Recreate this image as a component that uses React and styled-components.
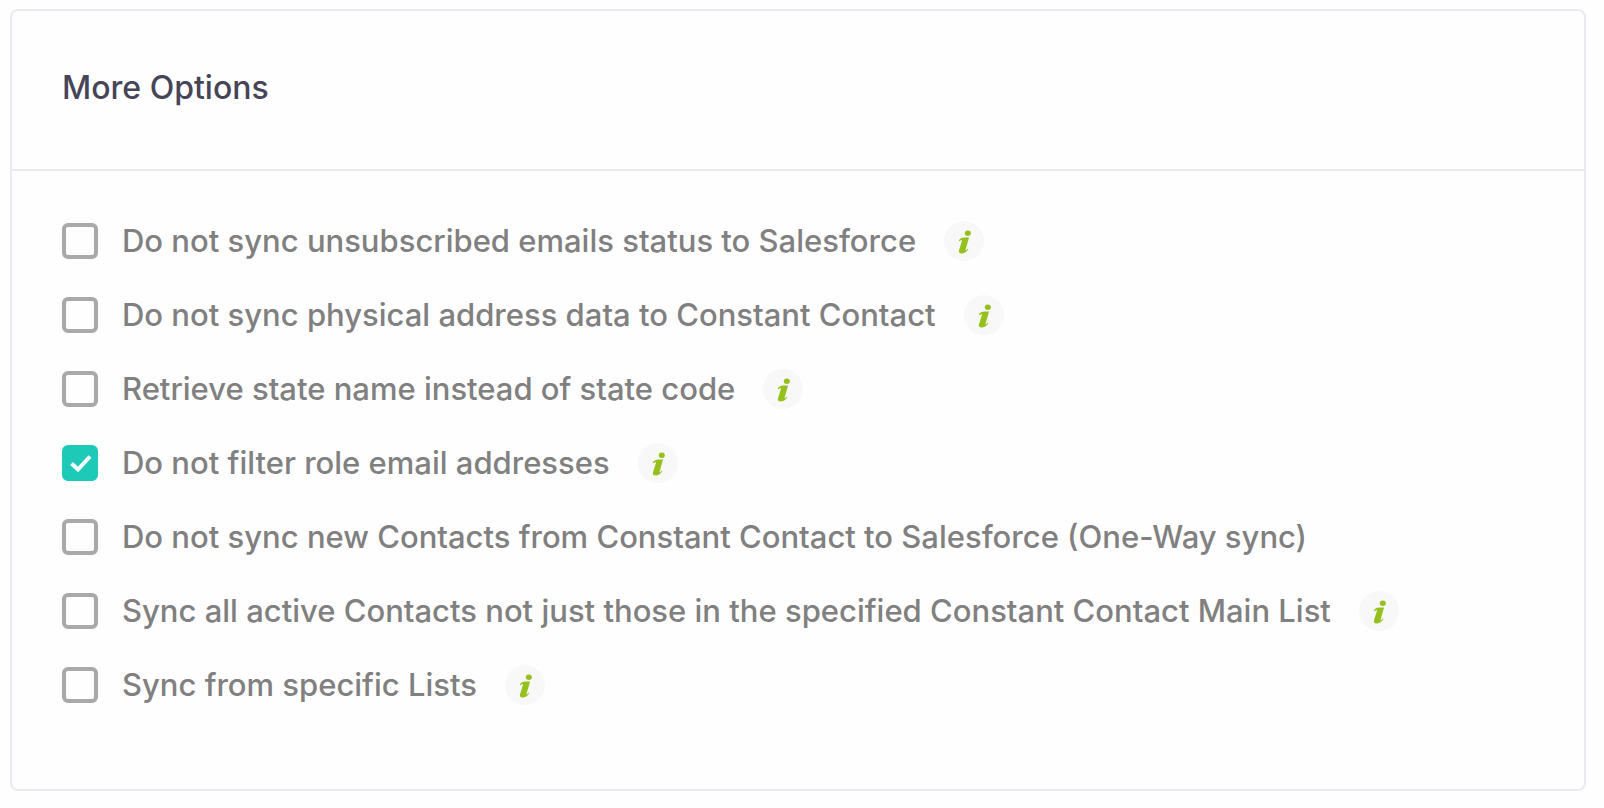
import React, { useState } from "react";
import styled, { createGlobalStyle } from "styled-components";

const GlobalStyle = createGlobalStyle`
  *, *::before, *::after { box-sizing: border-box; }
  body {
    margin: 0;
    background: #fefefe;
    font-family: Inter, "Liberation Sans", sans-serif;
    font-weight: 500;
  }
`;

const Card = styled.section`
  margin: 9px 18px 16px 10px;
  border: 2px solid #ebebef;
  border-radius: 8px;
`;

const Header = styled.header`
  padding: 54px 50px 58px;
  border-bottom: 2px solid #ebebee;
`;

const Title = styled.h2`
  margin: 0;
  font-size: 32px;
  font-weight: 500;
  line-height: 46px;
  color: #464457;
`;

const OptionList = styled.ul`
  display: flex;
  flex-direction: column;
  gap: 34px;
  margin: 0;
  padding: 50px 50px 84px;
  list-style: none;
`;

const Option = styled.li`
  display: flex;
  align-items: center;
  gap: 28px;
  min-height: 40px;
`;

const OptionLabel = styled.label`
  display: flex;
  align-items: center;
  gap: 24px;
  font-size: 31px;
  line-height: 40px;
  color: #808080;
  cursor: pointer;
`;

const CheckFrame = styled.span`
  display: grid;
  flex: none;
  width: 36px;
  height: 36px;

  > * { grid-area: 1 / 1; }
`;

const CheckInput = styled.input`
  appearance: none;
  width: 36px;
  height: 36px;
  margin: 0;
  border: 4px solid #a9a9a9;
  border-radius: 6px;
  cursor: pointer;

  &:checked {
    border-color: #1dc9b7;
    background: #1dc9b7;
  }
`;

const CheckMark = styled.svg`
  width: 36px;
  height: 36px;
  fill: none;
  stroke: #fff;
  stroke-width: 4;
  pointer-events: none;
  visibility: hidden;

  ${CheckInput}:checked + & { visibility: visible; }
`;

const InfoButton = styled.button`
  flex: none;
  width: 40px;
  height: 40px;
  padding: 0;
  border: 0;
  border-radius: 50%;
  background: #f8f8f8;
  cursor: pointer;
`;

const InfoGlyph = styled.svg`
  display: block;
  width: 40px;
  height: 40px;
  fill: #95c11f;
`;

function InfoIcon() {
  return (
    <InfoGlyph viewBox="0 0 40 40" aria-hidden="true">
      <ellipse cx="23.8" cy="12.2" rx="3" ry="2.7" />
      <path d="M14.8 19.4C16.2 17.4 18 16.5 20.4 16.5H25.1L21.6 28.5C21.3 29.5 21.8 29.6 22.4 29L23.8 27.6L24.4 28.2C22.5 31 20.2 32.4 17.4 32.4C15.3 32.4 14.4 31.2 15 29.2L17.9 19.9C18.1 19.1 17.7 18.9 17 19.3L15.4 20.3Z" />
    </InfoGlyph>
  );
}

const options = [
  { id: "unsubscribed", text: "Do not sync unsubscribed emails status to Salesforce", info: true },
  { id: "address", text: "Do not sync physical address data to Constant Contact", info: true },
  { id: "state", text: "Retrieve state name instead of state code", info: true },
  { id: "role", text: "Do not filter role email addresses", info: true },
  { id: "one-way", text: "Do not sync new Contacts from Constant Contact to Salesforce (One-Way sync)", info: false },
  { id: "all-active", text: "Sync all active Contacts not just those in the specified Constant Contact Main List", info: true },
  { id: "lists", text: "Sync from specific Lists", info: true },
];

export default function App() {
  const [checked, setChecked] = useState({ role: true });
  const toggle = (id) => setChecked((now) => ({ ...now, [id]: !now[id] }));

  return (
    <>
      <GlobalStyle />
      <Card>
        <Header>
          <Title>More Options</Title>
        </Header>
        <OptionList>
          {options.map(({ id, text, info }) => (
            <Option key={id}>
              <OptionLabel htmlFor={id}>
                <CheckFrame>
                  <CheckInput
                    type="checkbox"
                    id={id}
                    checked={Boolean(checked[id])}
                    onChange={() => toggle(id)}
                  />
                  <CheckMark viewBox="0 0 36 36" aria-hidden="true">
                    <path d="M9.5 18.5L16 24.5L28 11.5" />
                  </CheckMark>
                </CheckFrame>
                {text}
              </OptionLabel>
              {info && (
                <InfoButton type="button" aria-label="Info">
                  <InfoIcon />
                </InfoButton>
              )}
            </Option>
          ))}
        </OptionList>
      </Card>
    </>
  );
}
